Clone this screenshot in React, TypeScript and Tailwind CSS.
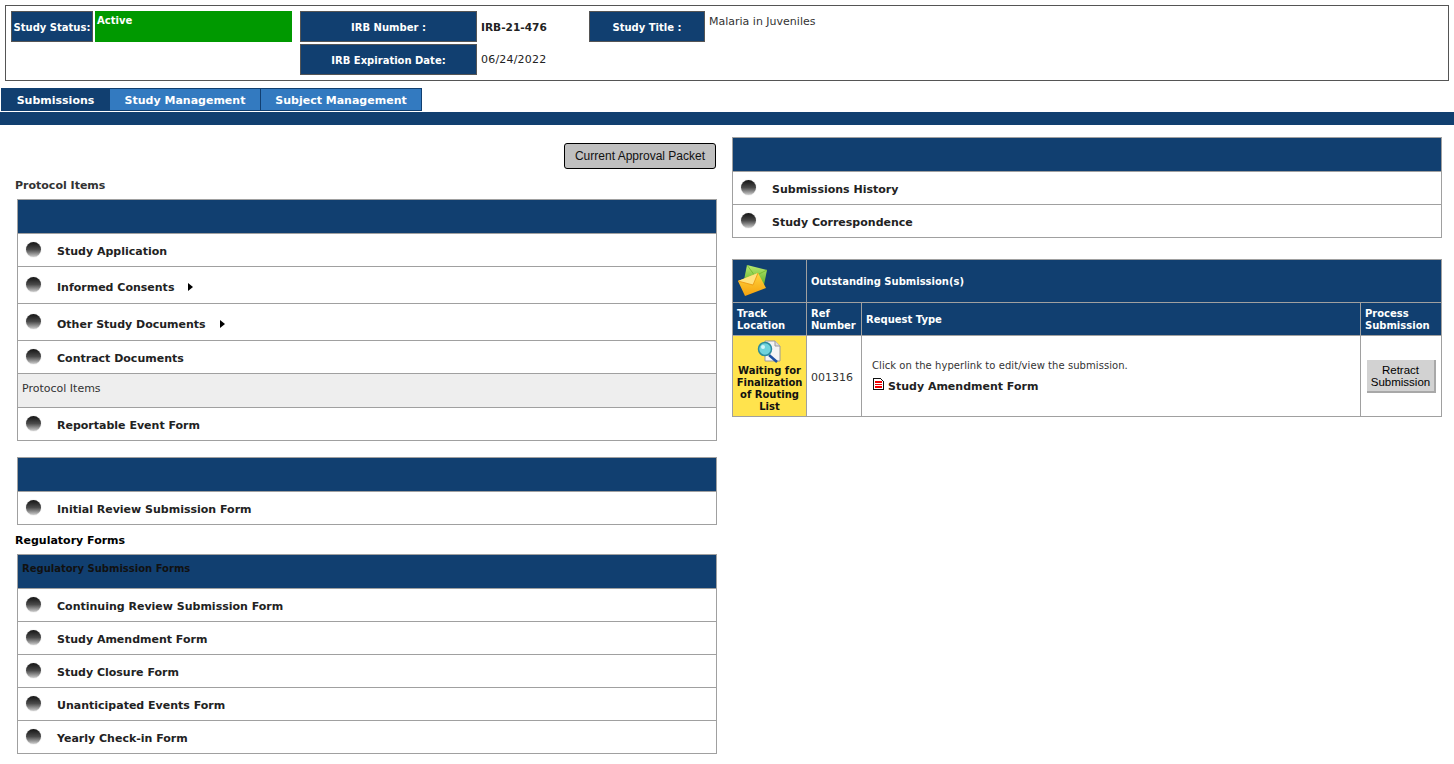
import type { ReactNode } from "react";

const font = "font-['DejaVu_Sans',Verdana,sans-serif]";

function Bullet() {
  return <span className="mt-[-2px] ml-[8px] h-[15px] w-[15px] shrink-0 rounded-full bg-linear-to-b from-[#151515] via-[#4a4a4a] to-[#d0d0d0] shadow-[0_0_1px_#aaa]" />;
}

function Arrow() {
  return (
    <svg className="mt-[3px] ml-[14px]" width="5" height="8" viewBox="0 0 5 8">
      <path d="M0 0 L5 4 L0 8 Z" fill="#000" />
    </svg>
  );
}

function Row({ label, arrow, h = "h-[33px]", m = "mt-[4px]" }: { label: string; arrow?: boolean; h?: string; m?: string }) {
  return (
    <div className={`flex items-center border-t border-[#a0a0a0] ${h}`}>
      <Bullet />
      <span className={`ml-[16px] text-[11px] font-bold text-[#222] ${m}`}>{label}</span>
      {arrow && <Arrow />}
    </div>
  );
}

function Panel({ title, children }: { title?: string; children: ReactNode }) {
  return (
    <div className="border border-[#a0a0a0]">
      <div className="h-[33px] bg-[#113f70] pt-[6px] pl-[4px] text-[10px] font-bold text-[#111]">{title}</div>
      {children}
    </div>
  );
}

function Label({ children, className = "" }: { children: ReactNode; className?: string }) {
  return (
    <div className={`flex h-[31px] items-center justify-center border border-[#555] bg-[#113f70] pt-[2px] text-[10px] font-bold text-white ${className}`}>
      {children}
    </div>
  );
}

function Envelopes() {
  return (
    <svg width="30" height="32" viewBox="0 0 30 32">
      <defs>
        <linearGradient id="green" x1="0" y1="0" x2="0" y2="1">
          <stop offset="0" stopColor="#b9ea70" />
          <stop offset="1" stopColor="#5fae2a" />
        </linearGradient>
        <linearGradient id="orange" x1="0" y1="0" x2="0" y2="1">
          <stop offset="0" stopColor="#ffd53f" />
          <stop offset="1" stopColor="#f5a20e" />
        </linearGradient>
      </defs>
      <path d="M9 0 L29 5 L26 20 L6 15 Z" fill="url(#green)" />
      <path d="M9 0 L17 11 L29 5" fill="none" stroke="#6fb52f" strokeWidth="0.8" />
      <path d="M0 16 L20 8 L28 23 L7 31 Z" fill="url(#orange)" />
      <path d="M0 16 L15 20 L20 8" fill="#ffe27e" stroke="#e8930c" strokeWidth="0.8" />
    </svg>
  );
}

function DocSearch() {
  return (
    <svg className="mr-[2px]" width="24" height="23" viewBox="0 0 24 23">
      <path d="M8 1 H18 L23 6 V21 H8 Z" fill="#f4f4f4" stroke="#9a9a9a" />
      <path d="M18 1 V6 H23" fill="#ddd" stroke="#9a9a9a" />
      <path d="M12 15 L20 22" stroke="#1c4fa0" strokeWidth="2.5" />
      <circle cx="8" cy="9" r="6.5" fill="#6fd3dc" stroke="#2a8c9c" strokeWidth="1.5" />
      <circle cx="6" cy="7" r="2" fill="#d6f6f8" />
    </svg>
  );
}

function RedDoc() {
  return (
    <svg className="mb-[8px] ml-[1px]" width="11" height="12" viewBox="0 0 11 12" shapeRendering="crispEdges">
      <path d="M0.5 0.5 H7.5 L10.5 3.5 V11.5 H0.5 Z" fill="#fff" stroke="#111" />
      <rect x="2" y="3" width="7" height="7" fill="#f00000" />
      <rect x="2" y="5" width="7" height="1" fill="#fff" />
      <rect x="2" y="7" width="7" height="1" fill="#fff" />
    </svg>
  );
}

export default function App() {
  return (
    <div className={`${font} h-[764px] w-[1454px] overflow-hidden bg-white pt-[5px] text-[#222]`}>
      {/* study header */}
      <div className="mx-[5px] flex h-[76px] w-[1444px] items-start border border-[#555] pt-[5px] pl-[5px]">
        <Label className="w-[82px]">Study Status:</Label>
        <div className="ml-[2px] h-[31px] w-[197px] bg-[#009900] pt-[2px] pl-[2px] text-[10px] font-bold text-white">Active</div>
        <div className="ml-[8px] flex w-[177px] flex-col gap-[2px]">
          <Label>IRB Number :</Label>
          <Label>IRB Expiration Date:</Label>
        </div>
        <div className="ml-[4px] flex w-[108px] flex-col gap-[2px]">
          <div className="flex h-[31px] items-center pt-[2px] text-[10.6px] font-bold">IRB-21-476</div>
          <div className="flex h-[31px] items-center pt-[2px] text-[11px] tracking-[0.2px]">06/24/2022</div>
        </div>
        <Label className="w-[116px]">Study Title :</Label>
        <div className="ml-[4px] pt-[3px] text-[11px] text-[#333]">Malaria in Juveniles</div>
      </div>

      {/* tabs */}
      <div className="mt-[7px] ml-[1px] flex h-[23px] text-[11px] font-bold text-white">
        <div className="flex w-[109px] items-center justify-center border border-[#113f70] bg-[#113f70] pt-[3px]">Submissions</div>
        <div className="flex w-[151px] items-center justify-center border border-l-0 border-[#113f70] bg-[#337ac0] pt-[3px]">Study Management</div>
        <div className="flex w-[161px] items-center justify-center border border-l-0 border-[#113f70] bg-[#337ac0] pt-[3px]">Subject Management</div>
      </div>
      <div className="mt-px h-[13px] bg-[#113f70]" />

      <div className="flex items-start">
        {/* left column */}
        <div className="ml-[17px] w-[700px]">
          <div className="flex justify-end pt-[18px] pr-px">
            <button className="h-[26px] w-[152px] rounded-[3px] border border-black bg-[#c0c0c0] font-['Liberation_Sans',Arial,sans-serif] text-[12px] text-[#111]">
              Current Approval Packet
            </button>
          </div>
          <div className="mt-[10px] -ml-[2px] h-[20px] text-[11px] leading-[13px] font-bold text-[#333]">Protocol Items</div>
          <Panel>
            <Row label="Study Application" />
            <Row label="Informed Consents" arrow h="h-[37px]" m="mt-[6px]" />
            <Row label="Other Study Documents" arrow h="h-[37px]" m="mt-[6px]" />
            <Row label="Contract Documents" />
            <div className="h-[34px] border-t border-[#a0a0a0] bg-[#eeeeee] pt-[7px] pl-[4px] text-[11px] text-[#333]">Protocol Items</div>
            <Row label="Reportable Event Form" />
          </Panel>
          <div className="mt-[16px]">
            <Panel>
              <Row label="Initial Review Submission Form" />
            </Panel>
          </div>
          <div className="mt-[8px] -ml-[2px] h-[21px] text-[11px] leading-[15px] font-bold text-black">Regulatory Forms</div>
          <Panel title="Regulatory Submission Forms">
            <Row label="Continuing Review Submission Form" />
            <Row label="Study Amendment Form" />
            <Row label="Study Closure Form" />
            <Row label="Unanticipated Events Form" />
            <Row label="Yearly Check-in Form" />
          </Panel>
        </div>

        {/* right column */}
        <div className="mt-[12px] ml-[15px] w-[710px]">
          <Panel>
            <Row label="Submissions History" />
            <Row label="Study Correspondence" />
          </Panel>
          <table className="mt-[21px] w-[710px] table-fixed border-collapse text-[10px]">
            <colgroup>
              <col className="w-[74px]" />
              <col className="w-[55px]" />
              <col />
              <col className="w-[81px]" />
            </colgroup>
            <tbody>
              <tr className="h-[43px] bg-[#113f70] font-bold text-white">
                <td className="border border-[#a0a0a0] pl-[5px]">
                  <Envelopes />
                </td>
                <td colSpan={3} className="border border-[#a0a0a0] pl-[4px]">Outstanding Submission(s)</td>
              </tr>
              <tr className="h-[33px] bg-[#113f70] text-left leading-[12px] font-bold text-white">
                <td className="border border-[#a0a0a0] pt-[2px] pl-[4px]">Track<br />Location</td>
                <td className="border border-[#a0a0a0] pt-[2px] pl-[4px]">Ref<br />Number</td>
                <td className="border border-[#a0a0a0] pt-[2px] pl-[4px]">Request Type</td>
                <td className="border border-[#a0a0a0] pt-[2px] pl-[4px]">Process<br />Submission</td>
              </tr>
              <tr className="h-[81px]">
                <td className="border border-[#a0a0a0] bg-[#ffe34d] text-center align-top leading-[12px] font-bold text-[#111]">
                  <div className="flex justify-center pt-[4px] pb-[2px]">
                    <DocSearch />
                  </div>
                  Waiting for Finalization of Routing List
                </td>
                <td className="border border-[#a0a0a0] pt-[4px] pl-[4px] text-[11px] text-[#333]">001316</td>
                <td className="border border-[#a0a0a0] pt-[2px] pl-[10px]">
                  <div className="pt-[1px] tracking-[0.06px] text-[#333]">Click on the hyperlink to edit/view the submission.</div>
                  <div className="mt-[5px] flex items-center gap-[4px] text-[11px] font-bold text-[#222]">
                    <RedDoc />
                    Study Amendment Form
                  </div>
                </td>
                <td className="border border-[#a0a0a0] pl-[1px] text-center">
                  <button className="h-[33px] w-[69px] border-r-2 border-b-2 border-[#a8a8a8] bg-[#d2d2d2] pt-[2px] font-['Liberation_Sans',Arial,sans-serif] text-[11.5px] leading-[12px] text-black">
                    Retract<br />Submission
                  </button>
                </td>
              </tr>
            </tbody>
          </table>
        </div>
      </div>
    </div>
  );
}
